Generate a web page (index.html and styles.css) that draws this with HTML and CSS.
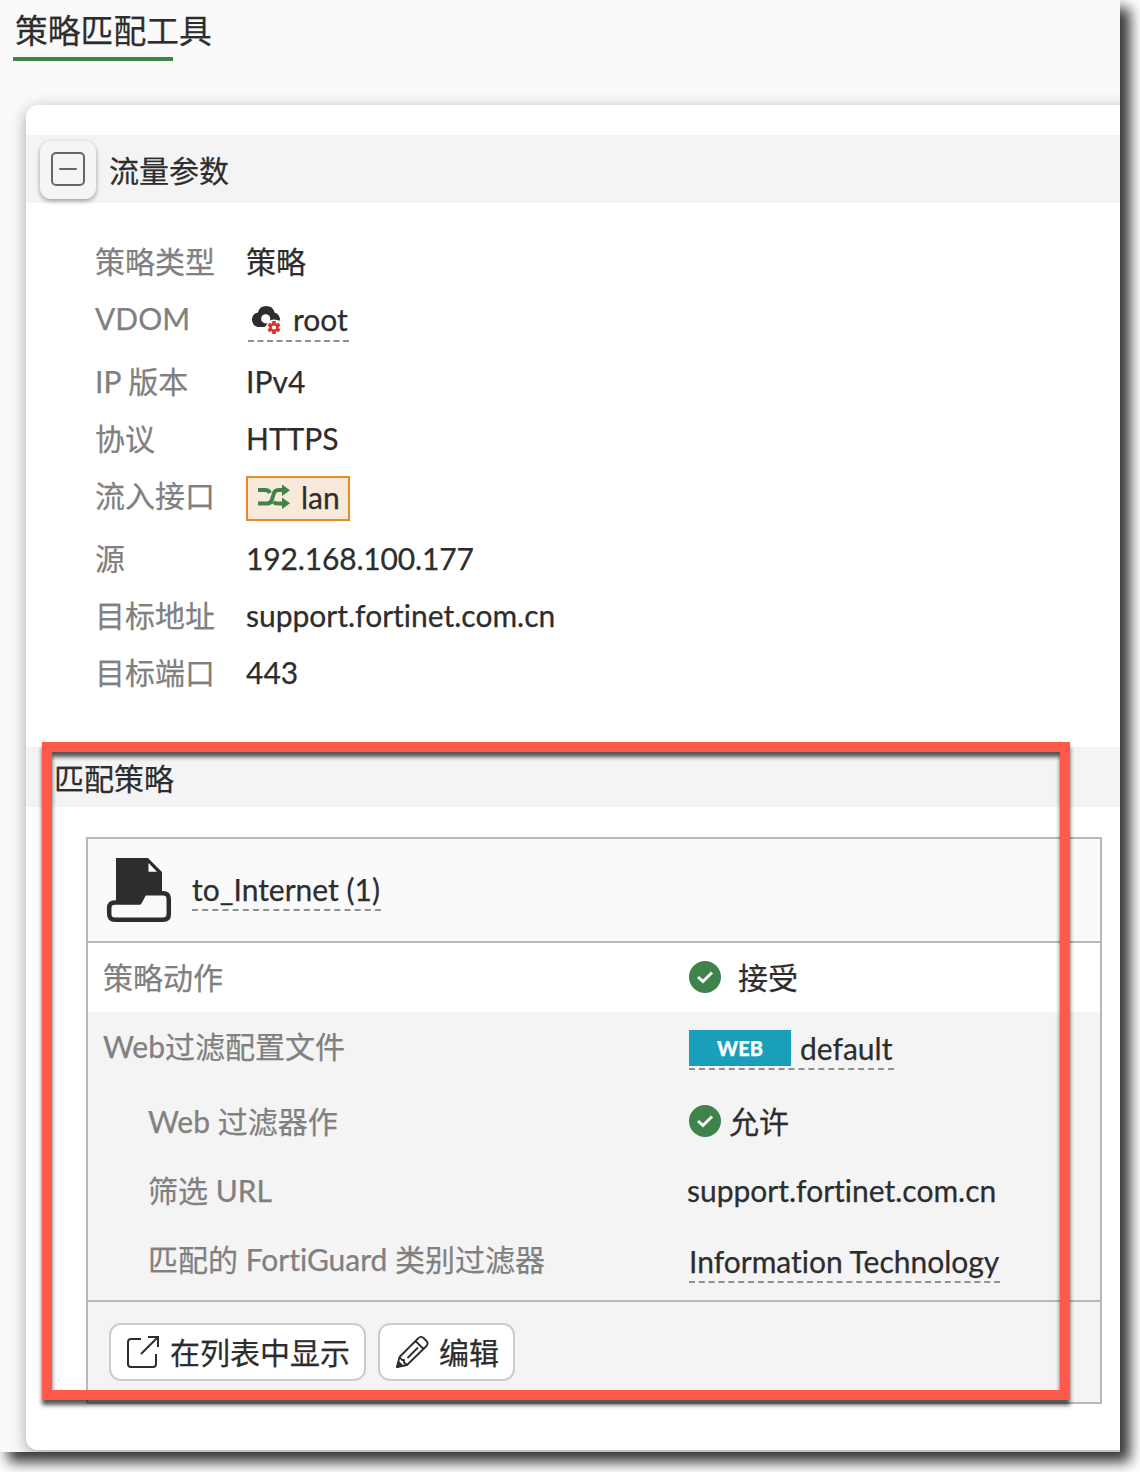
FILE: index.html
```html
<!DOCTYPE html>
<html lang="zh-CN">
<head>
<meta charset="utf-8">
<title>策略匹配工具</title>
<link rel="stylesheet" href="styles.css">
</head>
<body>
<main class="window">
  <div class="viewport">
    <h1 class="title">策略匹配工具</h1>
    <div class="title-bar"></div>
    <section class="card">
      <div class="section-head">
        <button class="collapse" aria-label="折叠">
          <svg width="34" height="34" viewBox="0 0 34 34" fill="none" stroke="#666" stroke-width="2"><rect x="1" y="1" width="32" height="32" rx="4"/><path d="M9 17h16" stroke-linecap="round"/></svg>
        </button>
        <h2 class="section-title">流量参数</h2>
      </div>
      <dl class="params">
        <div class="param"><dt>策略类型</dt><dd>策略</dd></div>
        <div class="param tall"><dt>VDOM</dt><dd><span class="link vdom">
          <svg class="cloud" width="30" height="30" viewBox="0 0 30 30"><path fill="#2d2d2d" d="M7 22A7 7 0 0 1 1 15 7 7 0 0 1 7 7.500A8.500 8.500 0 0 1 23.500 7.500Q29 9 29 15.500H22.500L18 18 13.500 22Z"/><circle cx="14.700" cy="13.800" r="4.600" fill="#fff"/><circle cx="23" cy="22.500" r="8" fill="#fff"/><g stroke="#d93327" stroke-width="3.600"><path d="M23 16v13M17.400 19.200l11.200 6.600M28.600 19.200l-11.200 6.600"/></g><circle cx="23" cy="22.500" r="4.700" fill="#d93327"/><circle cx="23" cy="22.500" r="2.100" fill="#fff"/></svg>root</span></dd></div>
        <div class="param"><dt>IP 版本</dt><dd>IPv4</dd></div>
        <div class="param"><dt>协议</dt><dd>HTTPS</dd></div>
        <div class="param tall"><dt>流入接口</dt><dd><span class="chip">
          <svg width="32" height="24" viewBox="0 0 32 24"><path d="M0 5h7.500q3 0 4.500 3M0 18.500h9q4 0 5-4l1.500-5q1-4.500 5-4.500H25M15.500 17q1.500 1.500 4 1.500H25" fill="none" stroke="#3f824a" stroke-width="4"/><path d="M24-.500 32 5.200 24 11zM24 12.500 32 18.300 24 24z" fill="#3f824a"/></svg>lan</span></dd></div>
        <div class="param"><dt>源</dt><dd class="digits">192.168.100.177</dd></div>
        <div class="param"><dt>目标地址</dt><dd>support.fortinet.com.cn</dd></div>
        <div class="param"><dt>目标端口</dt><dd>443</dd></div>
      </dl>
      <div class="match-head"><h2 class="section-title">匹配策略</h2></div>
      <div class="policy">
        <div class="policy-head">
          <svg width="64" height="65" viewBox="0 0 64 65"><path fill="#2d2d2d" d="M9 0H41L55 14V36H35L30 46H9z"/><path fill="#fff" d="M41.500 5v8.800H50z"/><path fill="#fafafa" stroke="#2d2d2d" stroke-width="4.500" stroke-linejoin="round" d="M8 44.500H32.500L37.500 35.300H56Q61.800 35.300 61.800 41V56Q61.800 61.800 56 61.800H8Q2.200 61.800 2.200 56V50Q2.200 44.500 8 44.500z"/></svg>
          <span class="link policy-name">to_Internet (1)</span>
        </div>
        <div class="result r1"><div class="label">策略动作</div><div class="value accept"><svg class="check" viewBox="0 0 32 32"><circle cx="16" cy="16" r="16" fill="#3f824a"/><path d="m9 16 5 4.500 9-9" fill="none" stroke="#fff" stroke-width="3"/></svg>接受</div></div>
        <div class="result r2"><div class="label">Web过滤配置文件</div><div class="value"><span class="link profile"><span class="badge">WEB</span>default</span></div></div>
        <div class="result r3 sub"><div class="label">Web 过滤器作</div><div class="value allow"><svg class="check" viewBox="0 0 32 32"><circle cx="16" cy="16" r="16" fill="#3f824a"/><path d="m9 16 5 4.500 9-9" fill="none" stroke="#fff" stroke-width="3"/></svg>允许</div></div>
        <div class="result r4 sub"><div class="label">筛选 URL</div><div class="value url">support.fortinet.com.cn</div></div>
        <div class="result r5 sub"><div class="label">匹配的 FortiGuard 类别过滤器</div><div class="value"><span class="link category">Information Technology</span></div></div>
        <div class="actions">
          <button class="btn show"><svg width="34" height="34" viewBox="0 0 34 34" fill="none" stroke="#2d2d2d" stroke-width="2"><path d="M15 4H5Q2 4 2 7V29Q2 32 5 32H27Q30 32 30 29V19M15 19 32 2M22 2H32V12"/></svg><span>在列表中显示</span></button>
          <button class="btn edit"><svg width="34" height="34" viewBox="0 0 34 34" fill="none" stroke="#2d2d2d" stroke-width="1.800" stroke-linejoin="round"><path d="M2 32 4.500 22 23 3.500Q25.500.500 28.500 3L31.500 6Q34 8.500 31 11.500L12 30zM4.500 22 7 25H9V27.500L12 30M20.500 6 28.500 14M12.500 23 23 12.500"/><path d="M2 32 3.500 27 7 30.500z" fill="#2d2d2d"/></svg><span>编辑</span></button>
        </div>
      </div>
    </section>
    <div class="highlight"></div>
  </div>
</main>
</body>
</html>
```
FILE: styles.css
```css
* { box-sizing: border-box; }
body {
  margin: 0;
  width: 1140px;
  height: 1472px;
  overflow: hidden;
  background: #fff;
  color: #2d2d2d;
  font: 30px Lato, "Noto Sans CJK SC", sans-serif;
  font-variant-ligatures: none;
  -webkit-text-stroke: .25px currentColor;
}
h1, h2, dl, dd { margin: 0; font-weight: 400; }
svg { display: block; flex: none; overflow: visible; }
.window {
  width: 1120px;
  height: 1452px;
  box-shadow: 9px 9px 13px 1px rgba(0, 0, 0, .8);
}
.viewport {
  position: relative;
  width: 1120px;
  height: 1452px;
  overflow: hidden;
  background: #fafafa;
}
.title { height: 57px; padding-left: 15px; font-size: 32.8px; line-height: 61px; white-space: nowrap; }
.title-bar { width: 160px; height: 4px; margin-left: 13px; background: #3f824a; }
.card {
  width: 1130px;
  height: 1345px;
  margin: 44px 0 0 26px;
  padding-top: 30px;
  border-radius: 12px;
  background: #fff;
  box-shadow: 0 4px 16px rgba(0, 0, 0, .34);
}
.section-head { display: flex; align-items: center; gap: 13px; height: 68px; padding: 2px 0 0 14px; background: #f4f4f4; }
.collapse {
  display: grid;
  place-items: center;
  width: 56px;
  height: 58px;
  padding: 0 0 3px;
  border: 0;
  border-radius: 11px;
  background: #f5f5f5;
  box-shadow: 0 2px 5px rgba(0, 0, 0, .36);
}
.section-title { font-size: 30px; line-height: 60px; }
.params { height: 544px; padding: 30px 0 0 69px; }
.param { display: flex; height: 57px; line-height: 57px; }
.param.tall { height: 63px; }
.param dt { width: 151px; color: #808080; }
.digits { letter-spacing: -.15px; }
.link { display: flex; width: max-content; border-bottom: 2px dashed #909090; }
.vdom { align-items: center; gap: 12px; height: 41px; margin: 11px 0 0 2px; padding: 0 1px 0 3px; line-height: 37px; }
.vdom { padding-bottom: 2px; }
.cloud { margin-top: 0; }
.chip {
  display: flex;
  align-items: flex-start;
  gap: 11px;
  height: 45px;
  width: 104px;
  margin-top: 9px;
  padding-left: 10px;
  border: 2px solid #e38b27;
  background: #f8e9db;
  line-height: 39px;
}
.chip svg { margin-top: 7px; }
.match-head { height: 60px; padding: 1px 0 0 28px; background: #f4f4f4; }
.policy { width: 1016px; height: 567px; margin: 30px 0 0 60px; border: 2px solid #b8b8b8; }
.policy-head { display: flex; align-items: center; gap: 21px; height: 104px; padding: 0 0 0 19px; border-bottom: 2px solid #b8b8b8; background: #fafafa; }
.policy-name { height: 41px; padding-right: 1px; line-height: 38px; }
.result { display: flex; padding-left: 15px; background: #f4f4f4; line-height: 69px; }
.label { width: 586px; color: #808080; }
.sub { padding-left: 60px; }
.sub .label { width: 541px; }
.r1 { height: 69px; background: #fff; }
.r2 { height: 75px; }
.r3 { height: 69px; }
.r4 { height: 70px; }
.r5 { height: 74px; }
.r5 .label { line-height: 67px; }
.check { width: 32px; height: 32px; margin-bottom: 2px; }
.accept, .allow { display: flex; align-items: center; }
.accept { gap: 17px; }
.allow { gap: 8px; }
.url { margin-left: -2px; }
.profile { gap: 9px; height: 40px; margin-top: 18px; padding-right: 2px; line-height: 36px; }
.badge { width: 102px; height: 36px; background: #1a9fbb; color: #fff; font-size: 20px; font-weight: 900; line-height: 37px; text-align: center; }
.category { height: 40px; margin-top: 17px; padding-right: 1px; line-height: 37px; }
.actions { display: flex; gap: 12px; height: 102px; padding: 21px; border-top: 2px solid #b8b8b8; background: #f4f4f4; }
.btn {
  display: flex;
  align-items: center;
  gap: 10px;
  height: 58px;
  padding: 0 0 0 15px;
  border: 2px solid #ccc;
  border-radius: 12px;
  background: #fff;
  color: #2d2d2d;
  font: inherit;
  white-space: nowrap;
}
.btn span { padding-bottom: 2px; }
.show { width: 257px; }
.edit { width: 137px; }
.highlight {
  position: absolute;
  left: 42px;
  top: 742px;
  width: 1028px;
  height: 658px;
  border: 10px solid #ff594b;
  filter: drop-shadow(0 5px 2px rgba(0, 0, 0, .66));
}
```
